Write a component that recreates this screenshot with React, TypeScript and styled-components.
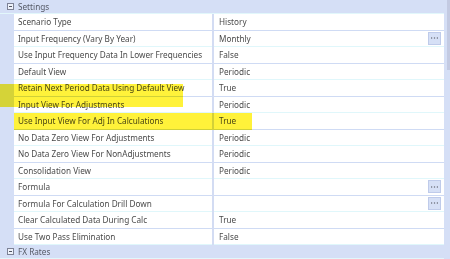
import React from 'react';
import styled, { createGlobalStyle } from 'styled-components';

const GlobalStyle = createGlobalStyle`
  html, body {
    margin: 0;
    padding: 0;
  }
  body {
    background: #ffffff;
    font-family: "Noto Sans", "Open Sans", sans-serif;
  }
`;

type Property = { name: string; value?: string; editor?: boolean };

const settings: Property[] = [
  { name: 'Scenario Type', value: 'History' },
  { name: 'Input Frequency (Vary By Year)', value: 'Monthly', editor: true },
  { name: 'Use Input Frequency Data In Lower Frequencies', value: 'False' },
  { name: 'Default View', value: 'Periodic' },
  { name: 'Retain Next Period Data Using Default View', value: 'True' },
  { name: 'Input View For Adjustments', value: 'Periodic' },
  { name: 'Use Input View For Adj In Calculations', value: 'True' },
  { name: 'No Data Zero View For Adjustments', value: 'Periodic' },
  { name: 'No Data Zero View For NonAdjustments', value: 'Periodic' },
  { name: 'Consolidation View', value: 'Periodic' },
  { name: 'Formula', editor: true },
  { name: 'Formula For Calculation Drill Down', editor: true },
  { name: 'Clear Calculated Data During Calc', value: 'True' },
  { name: 'Use Two Pass Elimination', value: 'False' },
];

const Page = styled.div`
  display: flex;
  width: 450px;
  height: 259px;
  overflow: hidden;
  background: #d5dff6;
`;

const Grid = styled.div`
  position: relative;
  flex: 0 0 444px;
  display: flex;
  flex-direction: column;
`;

const ScrollTrack = styled.div`
  flex: 1;
  display: flex;
  padding-left: 3px;
`;

const ScrollThumb = styled.div`
  width: 2.5px;
  height: 70px;
  background: #c3cae2;
`;

const Category = styled.div`
  flex: 0 0 14px;
  display: flex;
  align-items: center;
  gap: 4px;
  padding-left: 7px;
  background: #d5dff6;
  color: #555a66;
  font-size: 8.2px;
  border-bottom: 1px solid #e2f7fb;
  box-sizing: border-box;
`;

const Row = styled.div`
  flex: 0 0 16.5px;
  display: grid;
  grid-template-columns: 14px 198px 2px 1fr;
`;

const Gutter = styled.div`
  background: #d5dff6;
`;

const Cell = styled.div<{ $line: string }>`
  display: flex;
  align-items: center;
  justify-content: space-between;
  min-width: 0;
  padding: 0 3px 0 5px;
  background: #ffffff;
  border-bottom: 1px solid ${p => p.$line};
  color: #4a4a4a;
  font-size: 8.2px;
  white-space: nowrap;
`;

const NameCell = styled(Cell)`
  padding-left: 4px;
`;

const Divider = styled.div`
  background: #d3dcf3;
`;

const EditButton = styled.div`
  width: 13px;
  height: 13px;
  box-sizing: border-box;
  display: flex;
  align-items: center;
  justify-content: center;
  background: #d6e0f6;
  border: 1px solid #bfcbea;
`;

const Marker = styled.div<{ $top: number; $left: number; $width: number; $height: number }>`
  position: absolute;
  top: ${p => p.$top}px;
  left: ${p => p.$left}px;
  width: ${p => p.$width}px;
  height: ${p => p.$height}px;
  background: #fff23a;
  mix-blend-mode: multiply;
  pointer-events: none;
`;

const CollapseIcon = () => (
  <svg width="7" height="7" viewBox="0 0 7 7">
    <rect x="0.5" y="0.5" width="6" height="6" fill="#eef2fb" stroke="#7d8296" strokeWidth="1" />
    <line x1="2" y1="3.5" x2="5" y2="3.5" stroke="#50545f" strokeWidth="1" />
  </svg>
);

const Dots = () => (
  <svg width="7" height="2" viewBox="0 0 7 2">
    <rect x="0" y="0.5" width="1.2" height="1" fill="#4a4d57" />
    <rect x="2.9" y="0.5" width="1.2" height="1" fill="#4a4d57" />
    <rect x="5.8" y="0.5" width="1.2" height="1" fill="#4a4d57" />
  </svg>
);

export default function App() {
  return (
    <>
      <GlobalStyle />
      <Page>
        <Grid>
          <Category>
            <CollapseIcon />
            Settings
          </Category>
          {settings.map((p, i) => {
            const line = i % 2 === 0 ? '#cfdbf4' : '#e0f7fb';
            return (
              <Row key={p.name}>
                <Gutter />
                <NameCell $line={line}>{p.name}</NameCell>
                <Divider />
                <Cell $line={line}>
                  <span>{p.value ?? ''}</span>
                  {p.editor && (
                    <EditButton>
                      <Dots />
                    </EditButton>
                  )}
                </Cell>
              </Row>
            );
          })}
          <Category>
            <CollapseIcon />
            FX Rates
          </Category>
          <Marker $top={84} $left={0} $width={183} $height={23} />
          <Marker $top={113} $left={14} $width={238} $height={17} />
        </Grid>
        <ScrollTrack>
          <ScrollThumb />
        </ScrollTrack>
      </Page>
    </>
  );
}
